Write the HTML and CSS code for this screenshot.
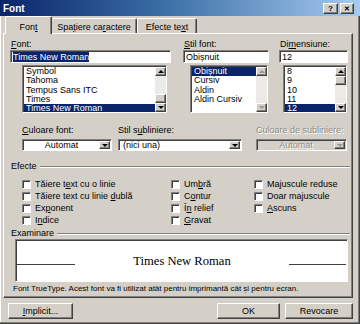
FILE: index.html
```html
<!DOCTYPE html>
<html lang="ro">
<head>
<meta charset="utf-8">
<title>Font</title>
<link rel="stylesheet" href="styles.css">
</head>
<body>
<div class="dialog">
  <div class="titlebar">
    <span class="title">Font</span>
    <div class="tb-btns">
      <span class="tb-btn help">?</span>
      <span class="tb-btn close">✕</span>
    </div>
  </div>
  <div class="tabs">
    <div class="tab active t1">Fon<u>t</u></div>
    <div class="tab t2">Spa<u>ț</u>iere ca<u>r</u>actere</div>
    <div class="tab t3">Efecte te<u>x</u>t</div>
  </div>
  <div class="panel">
    <div class="row1">
      <div class="col c1">
        <div class="lbl"><u>F</u>ont:</div>
        <div class="field"><span class="hl">Times New Roman</span></div>
        <div class="list l1">
          <div class="items">
            <div class="it">Symbol</div>
            <div class="it">Tahoma</div>
            <div class="it">Tempus Sans ITC</div>
            <div class="it">Times</div>
            <div class="it sel">Times New Roman</div>
          </div>
          <div class="sb">
            <div class="sbtn"><i class="tri up"></i></div>
            <div class="track"><div class="thumb th1"></div></div>
            <div class="sbtn"><i class="tri down"></i></div>
          </div>
        </div>
      </div>
      <div class="col c2">
        <div class="lbl"><u>S</u>til font:</div>
        <div class="field">Obișnuit</div>
        <div class="list l2">
          <div class="items">
            <div class="it sel">Obișnuit</div>
            <div class="it">Cursiv</div>
            <div class="it">Aldin</div>
            <div class="it">Aldin Cursiv</div>
          </div>
          <div class="sb">
            <div class="sbtn"><i class="tri up dis"></i></div>
            <div class="track"></div>
            <div class="sbtn"><i class="tri down dis"></i></div>
          </div>
        </div>
      </div>
      <div class="col c3">
        <div class="lbl">Di<u>m</u>ensiune:</div>
        <div class="field">12</div>
        <div class="list l3">
          <div class="items">
            <div class="it">8</div>
            <div class="it">9</div>
            <div class="it">10</div>
            <div class="it">11</div>
            <div class="it sel">12</div>
          </div>
          <div class="sb">
            <div class="sbtn"><i class="tri up"></i></div>
            <div class="track"><div class="thumb th3"></div></div>
            <div class="sbtn"><i class="tri down"></i></div>
          </div>
        </div>
      </div>
    </div>

    <div class="row2">
      <div class="ccol k1">
        <div class="lbl"><u>C</u>uloare font:</div>
        <div class="combo"><span class="ctext center">Automat</span><span class="dd"><i class="tri down"></i></span></div>
      </div>
      <div class="ccol k2">
        <div class="lbl">Stil s<u>u</u>bliniere:</div>
        <div class="combo"><span class="ctext">(nici una)</span><span class="dd"><i class="tri down"></i></span></div>
      </div>
      <div class="ccol k3">
        <div class="lbl disabled">Culoare de subliniere:</div>
        <div class="combo off"><span class="ctext center disabled">Automat</span><span class="dd"><i class="tri down dis"></i></span></div>
      </div>
    </div>

    <div class="group">
      <span class="glbl">Efecte</span><span class="gline"></span>
    </div>
    <div class="checks">
      <div class="chk"><span class="box"></span><span>Tăiere t<u>e</u>xt cu o linie</span></div>
      <div class="chk"><span class="box"></span><span>Um<u>b</u>ră</span></div>
      <div class="chk"><span class="box"></span><span>Ma<u>j</u>uscule reduse</span></div>
      <div class="chk"><span class="box"></span><span>Tăiere text cu linie <u>d</u>ublă</span></div>
      <div class="chk"><span class="box"></span><span>C<u>o</u>ntur</span></div>
      <div class="chk"><span class="box"></span><span>Doar ma<u>j</u>uscule</span></div>
      <div class="chk"><span class="box"></span><span>Ex<u>p</u>onent</span></div>
      <div class="chk"><span class="box"></span><span>Î<u>n</u> relief</span></div>
      <div class="chk"><span class="box"></span><span><u>A</u>scuns</span></div>
      <div class="chk"><span class="box"></span><span>I<u>n</u>dice</span></div>
      <div class="chk"><span class="box"></span><span><u>G</u>ravat</span></div>
    </div>

    <div class="group g2">
      <span class="glbl">Examinare</span><span class="gline"></span>
    </div>
    <div class="preview">
      <span class="pline pl"></span>
      <span class="ptext">Times New Roman</span>
      <span class="pline pr"></span>
    </div>
    <div class="note">Font TrueType. Acest font va fi utilizat atât pentru imprimantă cât și pentru ecran.</div>
  </div>

  <div class="buttons">
    <div class="btn b-impl"><u>I</u>mplicit...</div>
    <div class="spacer"></div>
    <div class="btn b-ok">OK</div>
    <div class="btn b-rev">Revocare</div>
  </div>
</div>
</body>
</html>
```
FILE: styles.css
```css
* { box-sizing: border-box; margin: 0; padding: 0; }
html, body { width: 360px; height: 324px; overflow: hidden; }
body {
  background: #d4d0c8;
  font-family: "Liberation Sans", Arial, sans-serif;
  font-size: 9px;
  color: #000;
}
u { text-decoration: underline; text-underline-offset: 1px; }

.dialog {
  width: 360px;
  height: 324px;
  background: #d4d0c8;
  box-shadow: inset -1px -1px #404040, inset -2px -2px #808080, inset 1px 0 #ffffff;
  display: flex;
  flex-direction: column;
}

/* title bar */
.titlebar {
  height: 16px;
  flex: none;
  background: linear-gradient(to right, #0a246a 0%, #3a6ea5 45%, #a6caf0 100%);
  display: flex;
  align-items: center;
  justify-content: space-between;
  padding: 0 6px 0 3px;
}
.title { color: #fff; font-weight: bold; font-size: 10px; font-family: "Liberation Sans", Arial, sans-serif; }
.tb-btns { display: flex; gap: 2px; }
.tb-btn {
  width: 15px;
  height: 11px;
  background: #d4d0c8;
  border: 1px solid;
  border-color: #fff #404040 #404040 #fff;
  box-shadow: inset -1px -1px #808080;
  font-size: 8px;
  font-weight: bold;
  line-height: 9px;
  text-align: center;
  color: #000;
}
.tb-btn.close { width: 14px; font-size: 7px; }

/* tabs */
.tabs {
  height: 17px;
  flex: none;
  display: flex;
  align-items: flex-end;
  padding-left: 5px;
}
.tab {
  height: 15px;
  border-top: 1px solid #fff;
  border-left: 1px solid #fff;
  border-right: 1px solid #404040;
  border-radius: 2px 2px 0 0;
  box-shadow: inset -1px 0 #808080;
  text-align: center;
  padding-top: 3px;
  line-height: 10px;
  white-space: nowrap;
}
.t1 { width: 47px; }
.t2 { width: 85px; border-left: none; }
.t3 { width: 60px; }
.tab.active {
  height: 18px;
  margin-bottom: -1px;
  background: #d4d0c8;
  position: relative;
  z-index: 1;
  padding-top: 5px;
}

/* panel */
.panel {
  margin-left: 3px;
  width: 350px;
  height: 265px;
  flex: none;
  border: 1px solid;
  border-color: #fff #404040 #404040 #fff;
  box-shadow: inset -1px -1px #808080;
  padding: 5px 0 0 0;
}

.row1 { display: flex; padding-left: 6px; }
.col { display: flex; flex-direction: column; }
.c1 { width: 161px; }
.c2 { width: 86px; margin-left: 12px; }
.c3 { width: 69px; margin-left: 10px; }
.lbl { height: 11px; line-height: 10px; padding-left: 1px; white-space: nowrap; }

.field {
  height: 13px;
  background: #fff;
  border: 1px solid;
  border-color: #808080 #fff #fff #808080;
  box-shadow: inset 1px 1px #404040;
  padding: 1px 0 0 2px;
  line-height: 10px;
  white-space: nowrap;
  overflow: hidden;
}
.hl { background: #0a246a; color: #fff; }

.list {
  height: 48px;
  margin-top: 2px;
  background: #fff;
  border: 1px solid;
  border-color: #808080 #fff #fff #808080;
  box-shadow: inset 1px 1px #404040;
  display: flex;
  padding: 1px 0 0 1px;
  overflow: hidden;
}
.l1 { margin-left: 12px; width: 145px; }
.l2 { margin-left: 7px; width: 78px; }
.l3 { margin-left: 4px; width: 64px; }
.items { flex: 1; overflow: hidden; }
.it { height: 9.3px; line-height: 9.3px; padding-left: 2px; white-space: nowrap; }
.it.sel { background: #0a246a; color: #fff; }

.sb { width: 11px; flex: none; display: flex; flex-direction: column; }
.sbtn {
  height: 9px;
  flex: none;
  background: #d4d0c8;
  border: 1px solid;
  border-color: #fff #404040 #404040 #fff;
  box-shadow: inset -1px -1px #808080;
  display: flex;
  align-items: center;
  justify-content: center;
}
.track { flex: 1; background: #eceae6; display: flex; flex-direction: column; }
.thumb {
  height: 9px;
  background: #d4d0c8;
  border: 1px solid;
  border-color: #fff #404040 #404040 #fff;
  box-shadow: inset -1px -1px #808080;
}
.th1 { margin-top: auto; }
.th3 { margin-top: 0; }

.tri { display: block; width: 0; height: 0; border-left: 3px solid transparent; border-right: 3px solid transparent; }
.tri.up { border-bottom: 3px solid #000; }
.tri.down { border-top: 3px solid #000; }
.tri.up.dis { border-bottom-color: #9a9791; }
.tri.down.dis { border-top-color: #9a9791; }

/* combos */
.row2 { display: flex; padding-left: 18px; margin-top: 12px; }
.ccol { display: flex; flex-direction: column; }
.ccol .lbl { height: 14px; line-height: 10px; padding-left: 0; }
.k1 { width: 90px; }
.k2 { width: 124px; margin-left: 6px; }
.k3 { width: 91px; margin-left: 14px; }
.combo {
  height: 12px;
  background: #fff;
  border: 1px solid;
  border-color: #808080 #fff #fff #808080;
  box-shadow: inset 1px 1px #404040;
  display: flex;
  padding: 1px 1px 1px 1px;
}
.combo.off { background: #d4d0c8; }
.ctext { flex: 1; line-height: 9px; padding-left: 3px; white-space: nowrap; }
.ctext.center { text-align: center; padding-left: 0; }
.dd {
  width: 11px;
  flex: none;
  background: #d4d0c8;
  border: 1px solid;
  border-color: #fff #404040 #404040 #fff;
  box-shadow: inset -1px -1px #808080;
  display: flex;
  align-items: center;
  justify-content: center;
}
.disabled { color: #8d8a84; text-shadow: 1px 1px #fff; }

/* groups */
.group { display: flex; align-items: center; padding-left: 7px; margin-top: 10px; height: 10px; padding-right: 2px; }
.g2 { margin-top: 2px; }
.glbl { line-height: 10px; padding-right: 3px; }
.gline { flex: 1; height: 2px; border-top: 1px solid #808080; border-bottom: 1px solid #fff; margin-top: 1px; }

.checks {
  display: grid;
  grid-template-columns: 149px 83px 1fr;
  grid-auto-rows: 12px;
  padding-left: 18px;
  margin-top: 7px;
}
.chk { display: flex; align-items: center; white-space: nowrap; }
.box {
  width: 9px;
  height: 9px;
  flex: none;
  background: #fff;
  border: 1px solid;
  border-color: #808080 #fff #fff #808080;
  box-shadow: inset 1px 1px #404040;
  margin-right: 4px;
}

/* preview */
.preview {
  margin: 1px 0 0 11px;
  width: 333px;
  height: 43px;
  background: #fff;
  border: 1px solid;
  border-color: #808080 #fff #fff #808080;
  box-shadow: inset 1px 1px #404040;
  display: flex;
  align-items: baseline;
  justify-content: space-between;
  padding: 13px 1px 0 1px;
}
.ptext { font-family: "Liberation Serif", "Times New Roman", serif; font-size: 12.6px; line-height: 16px; }
.pline { display: inline-block; height: 1px; background: #404040; }
.pl { width: 58px; }
.pr { width: 57px; }

.note { margin: 2px 0 0 9px; font-size: 8px; line-height: 10px; white-space: nowrap; }

/* buttons */
.buttons { display: flex; margin-top: 5px; height: 16px; padding-left: 8px; }
.spacer { flex: 1; }
.btn {
  height: 16px;
  background: #d4d0c8;
  border: 1px solid;
  border-color: #fff #404040 #404040 #fff;
  box-shadow: inset -1px -1px #808080;
  text-align: center;
  line-height: 14px;
}
.b-impl { width: 65px; }
.b-ok { width: 63px; }
.b-rev { width: 68px; margin-left: 5px; margin-right: 7px; }
```
